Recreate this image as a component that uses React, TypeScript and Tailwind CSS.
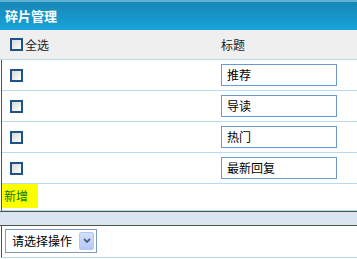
import React from "react";

const font = { fontFamily: '"Noto Sans CJK SC", "Noto Sans", sans-serif' };

function Box() {
  return (
    <span className="block w-[13px] h-[13px] border-[2px] border-[#1d5387] bg-gradient-to-br from-[#d8d8d6] to-white" />
  );
}

function Row({ title }: { title: string }) {
  return (
    <div className="flex items-center h-[31px] border-b border-[#b8dcef]">
      <div className="w-[219px] pl-[8px]">
        <Box />
      </div>
      <div className="w-[116px] h-[22px] border border-[#6a9bd0] flex items-center pl-[5px] text-[12px] text-black leading-none">
        {title}
      </div>
    </div>
  );
}

export default function App() {
  return (
    <div className="w-[357px] h-[259px] bg-white overflow-hidden" style={font}>
      <div className="h-[30px] border-t-[2px] border-[#5fb2d4] bg-gradient-to-b from-[#1787b6] to-[#17a3da] flex items-center pl-[5px] pb-[2px]">
        <span className="text-white font-bold text-[13px] leading-none">碎片管理</span>
      </div>
      <div className="h-[30px] bg-[#efefef] border-b border-[#b8dcef] flex items-center text-[12px] text-[#222] leading-none">
        <div className="w-[221px] flex items-center pl-[10px] gap-[2px]">
          <Box />
          <span>全选</span>
        </div>
        <span>标题</span>
      </div>
      <div className="ml-[1px] border-l border-[#4a5648]">
        <Row title="推荐" />
        <Row title="导读" />
        <Row title="热门" />
        <Row title="最新回复" />
        <div className="h-[27px] border-b border-[#b8dcef] flex items-start">
          <span className="bg-[#ffff00] h-[24px] w-[36px] flex items-center pl-[2px] text-[12px] text-[#008000] leading-none">
            新增
          </span>
        </div>
      </div>
      <div className="h-[15px] border-t border-b border-[#4a5648] bg-[#dbe5f2]" />
      <div className="ml-[1px] border-l border-[#4a5648] h-[32px] border-b border-b-[#b8dcef] pl-[3px] pt-[3px]">
        <div className="w-[92px] h-[24px] border border-[#7f9db9] flex items-center pl-[6px] pr-[2px] text-[12px] text-black leading-none">
          <span className="flex-1">请选择操作</span>
          <span className="w-[15px] h-[18px] rounded-[2px] border border-[#b4c8f2] bg-gradient-to-b from-[#d4e1fc] to-[#b4c9f6] flex items-center justify-center">
            <svg width="8" height="6" viewBox="0 0 8 6">
              <path d="M1 1 L4 4 L7 1" stroke="#4d6185" strokeWidth="1.8" fill="none" />
            </svg>
          </span>
        </div>
      </div>
    </div>
  );
}
